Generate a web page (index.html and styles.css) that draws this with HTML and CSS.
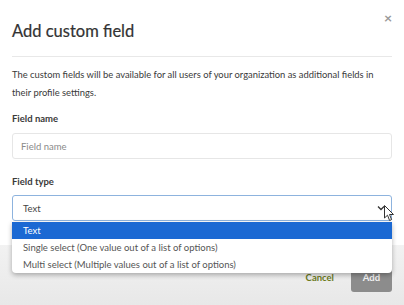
FILE: index.html
```html
<!DOCTYPE html>
<html lang="en">
<head>
    <meta charset="UTF-8">
    <meta name="viewport" content="width=device-width, initial-scale=1.0">
    <title>Add custom field</title>
    <link rel="stylesheet" href="styles.css">
</head>
<body>
    <div class="modal">
        <div class="modal-header">
            <h3>Add custom field</h3>
            <span class="close">&times;</span>
        </div>

        <div class="modal-body">
            <p class="intro">The custom fields will be available for all users of your organization as additional fields in their profile settings.</p>

            <label class="field-label">Field name</label>
            <input class="field-input" type="text" placeholder="Field name">

            <label class="field-label type-label">Field type</label>
            <div class="select-wrap">
                <div class="select-box">
                    <span>Text</span>
                    <svg class="chevron" width="8" height="6" viewBox="0 0 8 6"><path d="M1 1.5 L4 4.5 L7 1.5" fill="none" stroke="#333" stroke-width="1.3"/></svg>
                </div>

                <!-- Open dropdown list -->
                <ul class="options">
                    <li class="selected">Text</li>
                    <li>Single select (One value out of a list of options)</li>
                    <li>Multi select (Multiple values out of a list of options)</li>
                </ul>

                <!-- Mouse pointer -->
                <svg class="cursor" width="11" height="17" viewBox="0 0 11 17"><path d="M0.5 0.5 L0.5 13 L3.5 10.2 L5.6 15.5 L7.6 14.6 L5.5 9.5 L9.5 9.5 Z" fill="#fff" stroke="#333" stroke-width="1"/></svg>
            </div>
        </div>

        <div class="modal-footer">
            <a class="cancel" href="#">Cancel</a>
            <button class="add-btn" type="button">Add</button>
        </div>
    </div>
</body>
</html>
```

FILE: styles.css
```css
body {
    margin: 0;
    font-family: Lato, "Open Sans", sans-serif;
    color: #3a3a3a;
    background-color: #fff;
}

.modal {
    width: 404px;
    height: 305px;
    display: flex;
    flex-direction: column;
    overflow: hidden;
}

.modal-header {
    position: relative;
    margin: 0 12px;
    padding: 18px 0 12px;
    border-bottom: 1px solid #e8e8e8;
}

.modal-header h3 {
    margin: 0;
    font-size: 16.5px;
    line-height: 26px;
    font-weight: 400;
    color: #333;
    -webkit-text-stroke: 0.2px #333;
}

.close {
    position: absolute;
    right: 0;
    top: 9px;
    font-size: 14px;
    font-weight: bold;
    color: #999;
    line-height: 18px;
}

.modal-body {
    padding: 9px 12px 0;
    display: flex;
    flex-direction: column;
    flex: 1;
}

.intro {
    margin: 0 0 8px;
    font-size: 9.4px;
    line-height: 18px;
    color: #3a3a3a;
}

.field-label {
    font-size: 9.5px;
    line-height: 18px;
    font-weight: bold;
    color: #3a3a3a;
    margin-bottom: 5px;
}

.type-label {
    margin-top: 14px;
    margin-bottom: 4px;
}

.field-input {
    box-sizing: border-box;
    height: 26px;
    width: 100%;
    border: 1px solid #e6e6e6;
    border-radius: 3px;
    padding: 0 8px;
    font-family: inherit;
    font-size: 9.5px;
    color: #444;
    outline: none;
}

.field-input::placeholder {
    color: #8a8a8a;
}

.select-wrap {
    position: relative;
}

.select-box {
    box-sizing: border-box;
    height: 26px;
    border: 1px solid #8db3de;
    border-radius: 3px;
    padding: 0 10px;
    display: flex;
    align-items: center;
    justify-content: space-between;
    font-size: 9.5px;
    color: #444;
}

.chevron {
    margin-right: -4px;
}

/* Open dropdown */
.options {
    position: absolute;
    left: 0;
    right: 0;
    top: 27px;
    margin: 0;
    padding: 0;
    list-style: none;
    background-color: #fff;
    border-radius: 0 0 4px 4px;
    box-shadow: 0 2px 5px rgba(0, 0, 0, 0.3);
    z-index: 2;
    overflow: hidden;
}

.options li {
    height: 17px;
    line-height: 17px;
    padding: 0 11px;
    font-size: 9.5px;
    color: #555;
}

.options li.selected {
    background-color: #1b69d3;
    color: #fff;
}

.cursor {
    position: absolute;
    right: -3px;
    top: 10px;
    z-index: 3;
}

.modal-footer {
    height: 60px;
    box-sizing: border-box;
    background: linear-gradient(#f2f2f2, #e8e8e8);
    padding: 17px 12px 13px;
    display: flex;
    justify-content: flex-end;
    align-items: center;
    gap: 17px;
}

.cancel {
    font-size: 9.5px;
    font-weight: bold;
    color: #6b7a1d;
    text-decoration: none;
}

.add-btn {
    height: 30px;
    width: 41px;
    border: none;
    border-radius: 3px;
    background-color: #8c8c8c;
    color: #f4f4f4;
    font-family: inherit;
    font-size: 9.5px;
    font-weight: bold;
}
```
